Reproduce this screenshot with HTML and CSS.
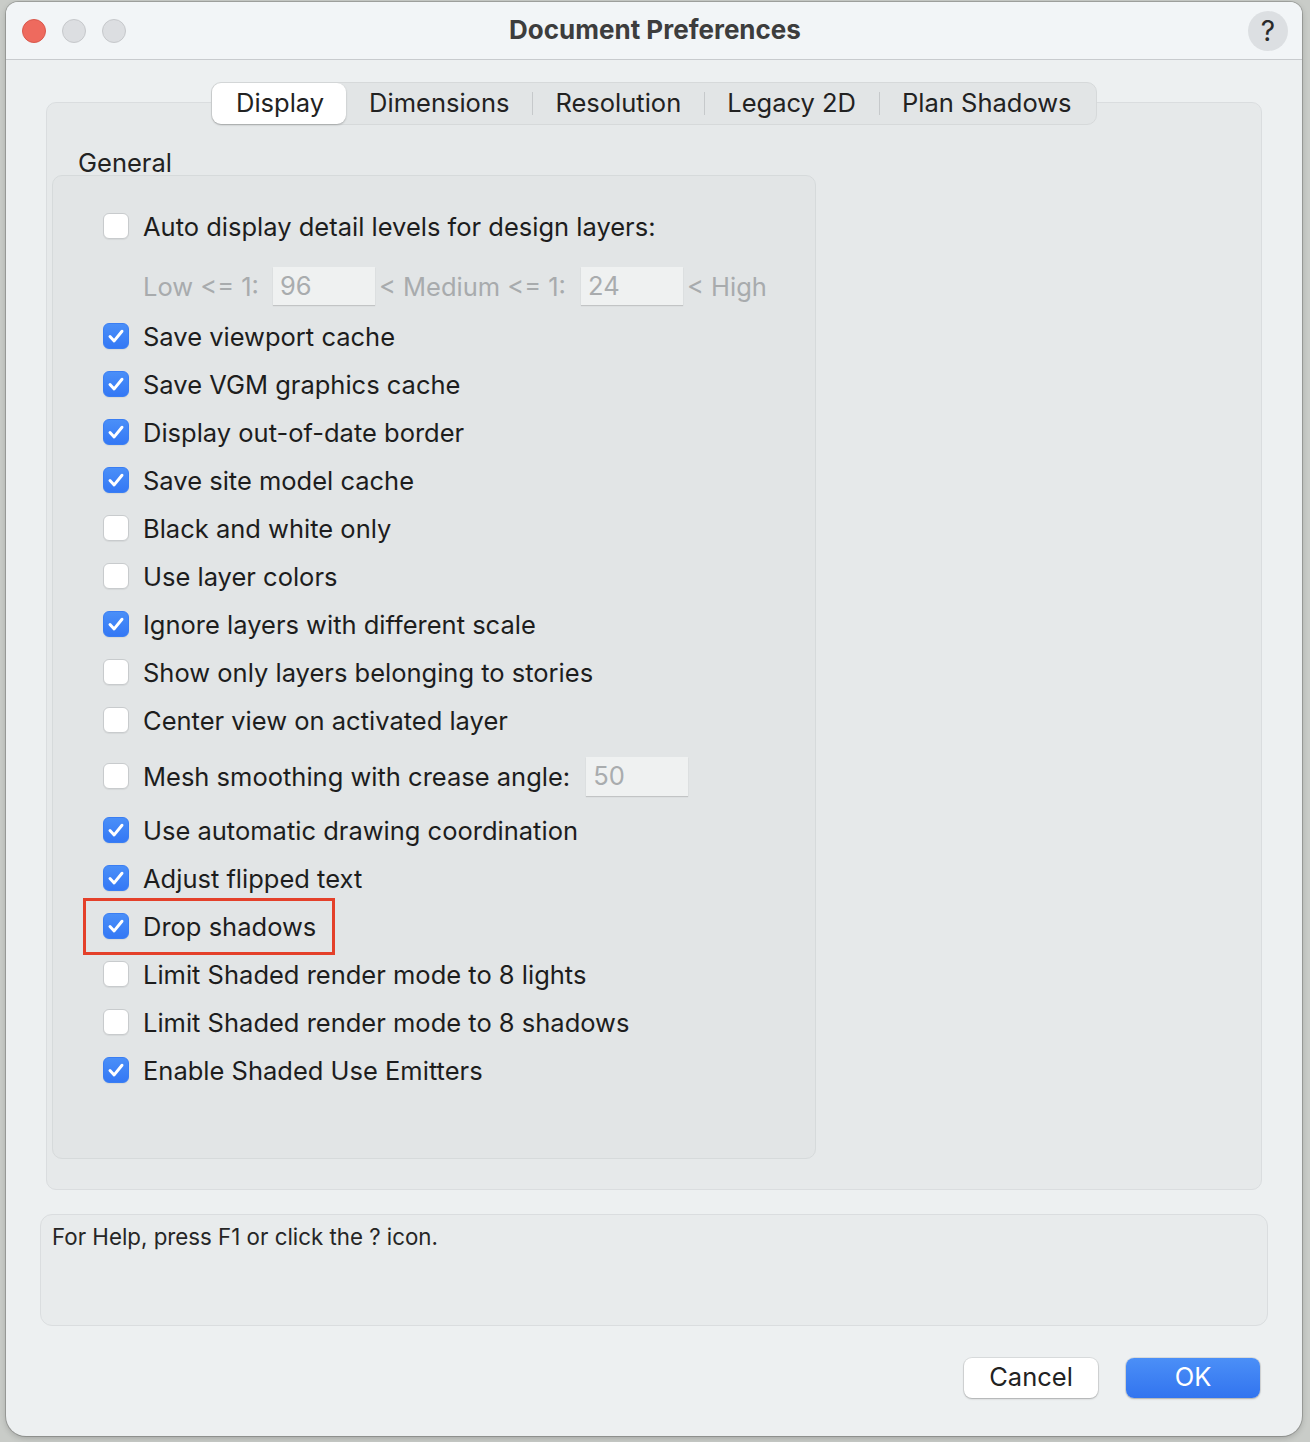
FILE: index.html
```html
<!DOCTYPE html>
<html>
<head>
<meta charset="utf-8">
<title>Document Preferences</title>
<link rel="stylesheet" href="styles.css">
</head>
<body>
<div class="window">
  <div class="titlebar">
    <div class="lights">
      <span class="light close"></span>
      <span class="light"></span>
      <span class="light"></span>
    </div>
    <div class="title">Document Preferences</div>
    <div class="help-wrap"><div class="help-btn">?</div></div>
  </div>
  <div class="content">
    <div class="tabs">
      <span class="tab active">Display</span>
      <span class="tab">Dimensions</span>
      <span class="tab sep">Resolution</span>
      <span class="tab sep">Legacy 2D</span>
      <span class="tab sep">Plan Shadows</span>
    </div>
    <div class="panel">
      <div class="group-title">General</div>
      <div class="group">
        <div class="row first"><span class="cb"></span><span class="label">Auto display detail levels for design layers:</span></div>
        <div class="row levels">
          <span class="dim lbl-low">Low &lt;= 1:</span>
          <span class="field">96</span>
          <span class="dim lbl-med">&lt; Medium &lt;= 1:</span>
          <span class="field">24</span>
          <span class="dim lbl-high">&lt; High</span>
        </div>
        <div class="row after-levels"><span class="cb on"><svg viewBox="0 0 26 26"><path d="M6.5 13.5 L11 18.3 L19.5 7.8"/></svg></span><span class="label">Save viewport cache</span></div>
        <div class="row"><span class="cb on"><svg viewBox="0 0 26 26"><path d="M6.5 13.5 L11 18.3 L19.5 7.8"/></svg></span><span class="label">Save VGM graphics cache</span></div>
        <div class="row"><span class="cb on"><svg viewBox="0 0 26 26"><path d="M6.5 13.5 L11 18.3 L19.5 7.8"/></svg></span><span class="label">Display out-of-date border</span></div>
        <div class="row"><span class="cb on"><svg viewBox="0 0 26 26"><path d="M6.5 13.5 L11 18.3 L19.5 7.8"/></svg></span><span class="label">Save site model cache</span></div>
        <div class="row"><span class="cb"></span><span class="label">Black and white only</span></div>
        <div class="row"><span class="cb"></span><span class="label">Use layer colors</span></div>
        <div class="row"><span class="cb on"><svg viewBox="0 0 26 26"><path d="M6.5 13.5 L11 18.3 L19.5 7.8"/></svg></span><span class="label">Ignore layers with different scale</span></div>
        <div class="row"><span class="cb"></span><span class="label">Show only layers belonging to stories</span></div>
        <div class="row"><span class="cb"></span><span class="label">Center view on activated layer</span></div>
        <div class="row mesh"><span class="cb"></span><span class="label">Mesh smoothing with crease angle:</span><span class="field mesh-field">50</span></div>
        <div class="row after-mesh"><span class="cb on"><svg viewBox="0 0 26 26"><path d="M6.5 13.5 L11 18.3 L19.5 7.8"/></svg></span><span class="label">Use automatic drawing coordination</span></div>
        <div class="row"><span class="cb on"><svg viewBox="0 0 26 26"><path d="M6.5 13.5 L11 18.3 L19.5 7.8"/></svg></span><span class="label">Adjust flipped text</span></div>
        <div class="row"><span class="hl"><span class="cb on"><svg viewBox="0 0 26 26"><path d="M6.5 13.5 L11 18.3 L19.5 7.8"/></svg></span><span class="label">Drop shadows</span></span></div>
        <div class="row"><span class="cb"></span><span class="label">Limit Shaded render mode to 8 lights</span></div>
        <div class="row"><span class="cb"></span><span class="label">Limit Shaded render mode to 8 shadows</span></div>
        <div class="row"><span class="cb on"><svg viewBox="0 0 26 26"><path d="M6.5 13.5 L11 18.3 L19.5 7.8"/></svg></span><span class="label">Enable Shaded Use Emitters</span></div>
      </div>
    </div>
    <div class="helpbox">For Help, press F1 or click the ? icon.</div>
    <div class="buttons">
      <button class="btn">Cancel</button>
      <button class="btn primary">OK</button>
    </div>
  </div>
</div>
</body>
</html>
```

FILE: styles.css
```css
* { box-sizing: border-box; }

html, body {
  margin: 0;
  height: 100%;
}

body {
  background: #c9ccc8;
  padding: 2px 8px 6px 6px;
  font-family: Inter, "Liberation Sans", "Noto Sans", sans-serif;
  color: #1f1f1f;
  overflow: hidden;
}

.window {
  width: 1296px;
  height: 1434px;
  background: #edf0f1;
  border-radius: 12px 12px 20px 20px;
  overflow: hidden;
  box-shadow: 0 0 0 1px rgba(0,0,0,0.18), 0 2px 6px rgba(0,0,0,0.2);
}

.titlebar {
  height: 58px;
  background: #f2f5f7;
  border-bottom: 1px solid #c8cbce;
  display: grid;
  grid-template-columns: 1fr auto 1fr;
  align-items: center;
  padding: 0 14px 0 16px;
}

.lights {
  display: flex;
  gap: 16px;
}

.light {
  width: 24px;
  height: 24px;
  border-radius: 50%;
  background: #dcdee1;
  border: 1px solid #c6c8cb;
}

.light.close {
  background: #ee6a5e;
  border-color: #d9584c;
}

.title {
  text-align: center;
  font-size: 26px;
  font-weight: 700;
  color: #3d3d3d;
  margin-top: -2px;
}

.help-wrap {
  display: flex;
  justify-content: flex-end;
}

.help-btn {
  width: 40px;
  height: 40px;
  border-radius: 50%;
  background: #dcdfe2;
  color: #2a2a2a;
  font-size: 28px;
  line-height: 40px;
  text-align: center;
}

.content {
  padding: 22px 34px 0;
}

.tabs {
  display: flex;
  width: 886px;
  height: 43px;
  margin: 0 auto;
  background: #e2e5e6;
  border: 1px solid #d6d9da;
  border-radius: 10px;
  position: relative;
  z-index: 1;
  align-items: center;
  font-size: 25.5px;
  color: #222;
}

.tab {
  padding: 0 23px 1px;
  height: 41px;
  line-height: 39px;
  position: relative;
}

.tab.active {
  background: #fff;
  border-radius: 9px;
  box-shadow: 0 1px 2px rgba(0,0,0,0.25);
  padding: 0 22px 1px 24px;
}

.tab.sep::before {
  content: "";
  position: absolute;
  left: 0;
  top: 9px;
  height: 23px;
  border-left: 1px solid #c6c9cb;
}

.panel {
  margin: -23px 6px 0;
  height: 1088px;
  background: #e6e9ea;
  border: 1px solid #dadddf;
  border-radius: 10px;
  padding: 46px 5px 0;
}

.group-title {
  font-size: 25.5px;
  line-height: 28px;
  padding-left: 26px;
  margin-bottom: -2px;
  color: #222;
}

.group {
  width: 764px;
  height: 984px;
  background: #e2e5e6;
  border: 1px solid #d6dadb;
  border-radius: 10px;
  padding: 26px 0 0 50px;
}

.row {
  display: flex;
  align-items: center;
  height: 48px;
  font-size: 25.5px;
  color: #1d1d1d;
}

.levels { margin-top: 12px; padding-left: 40px; }
.after-levels { margin-top: 2px; }
.mesh { margin-top: 8px; }
.after-mesh { margin-top: 6px; }

.cb {
  width: 26px;
  height: 26px;
  border-radius: 6px;
  background: #fff;
  border: 1px solid #c8cbcd;
  box-shadow: 0 1px 1px rgba(0,0,0,0.06);
  flex: none;
  margin-right: 14px;
  display: flex;
}

.cb.on {
  background: linear-gradient(#4a8ff8, #3478f5);
  border-color: #3a7ef3;
}

.cb svg {
  width: 24px;
  height: 24px;
}

.cb svg path {
  fill: none;
  stroke: #fff;
  stroke-width: 3.2;
  stroke-linecap: round;
  stroke-linejoin: round;
}

.dim { color: #a8abad; }

.lbl-low { width: 130px; }
.lbl-med { width: 206px; padding-left: 4px; }
.lbl-high { padding-left: 4px; }

.field {
  width: 102px;
  height: 38px;
  background: #eff1f1;
  box-shadow: 0 1px 1px rgba(0,0,0,0.14);
  color: #a9acae;
  line-height: 38px;
  padding-left: 7px;
  font-size: 25.5px;
}

.mesh-field {
  margin-left: 16px;
  height: 39px;
}

.hl {
  display: flex;
  align-items: center;
  position: relative;
}

.hl::after {
  content: "";
  position: absolute;
  left: -20px;
  right: -19px;
  top: -13px;
  bottom: -13px;
  border: 3px solid #e4402a;
}

.helpbox {
  margin-top: 24px;
  height: 112px;
  background: #e8ebec;
  border: 1px solid #dadddf;
  border-radius: 12px;
  padding: 9px 11px;
  font-size: 22.3px;
  line-height: 26px;
  color: #262626;
}

.buttons {
  display: flex;
  justify-content: flex-end;
  gap: 28px;
  margin-top: 32px;
  padding-right: 8px;
}

.btn {
  width: 134px;
  height: 40px;
  border-radius: 8px;
  border: none;
  background: #fff;
  font-family: inherit;
  font-size: 25.5px;
  line-height: 36px;
  padding: 0 0 2px;
  color: #222;
  box-shadow: 0 0 0 1px rgba(0,0,0,0.08), 0 1px 2px rgba(0,0,0,0.22);
}

.btn.primary {
  background: linear-gradient(#4b8ff7, #3274ef);
  color: #fff;
}
```
